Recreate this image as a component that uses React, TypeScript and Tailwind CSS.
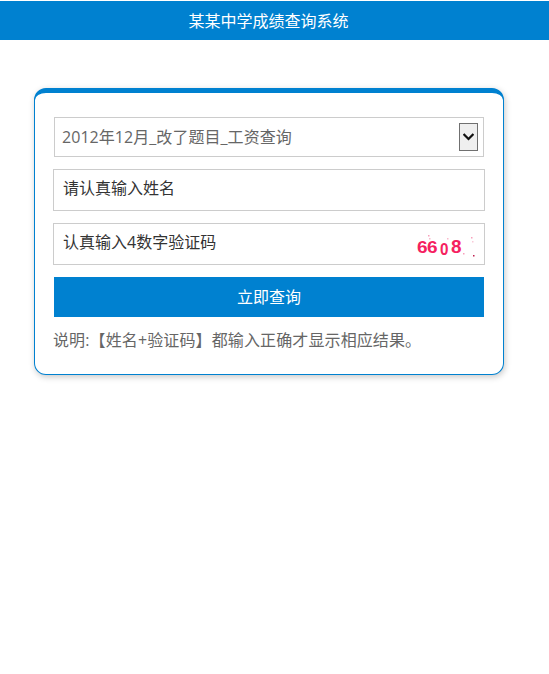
export default function App() {
  const font = "font-['Open_Sans','Noto_Sans_CJK_SC',sans-serif]";
  const digits: [string, number, number, number, number][] = [
    ["6", 17, 27, 17, 1.12],
    ["6", 27, 27, 17, 1.12],
    ["0", 40, 29, 16, 0.95],
    ["8", 51, 27, 18, 1.05],
  ];
  const dots: [number, number, string][] = [
    [28, 9, "#f7a0bb"],
    [29, 12, "#f9b9cc"],
    [47, 12, "#f9b9cc"],
    [71, 11, "#f7a0bb"],
    [72, 15, "#f9c9d8"],
    [63, 27, "#f7a0bb"],
    [73, 29, "#c02050"],
  ];
  return (
    <div className={`min-h-[674px] bg-white ${font}`}>
      <header className="mt-px flex h-[39px] items-center justify-center bg-[#0081d0] pr-[12px] pt-px text-[16px] text-white">
        某某中学成绩查询系统
      </header>
      <div className="px-[34px] pt-[48px]">
        <main className="flex h-[287px] w-[470px] flex-col gap-[12px] rounded-[12px] border border-t-[5px] border-[#0081d0] bg-white px-[19px] pt-[24px] shadow-[1px_2px_6px_rgba(0,0,0,0.22)]">
          <div className="relative h-[40px] w-[430px]">
            <select
              defaultValue="a"
              className="h-full w-full appearance-none border border-[#ccc] bg-white pb-px pl-[7px] pt-px text-[16px] tracking-[0.05px] text-[#666] outline-none"
            >
              <option value="a">2012年12月_改了题目_工资查询</option>
            </select>
            <span className="pointer-events-none absolute right-[6px] top-[6px] flex h-[28px] w-[19px] items-center justify-center border border-[#707070] bg-[#efefef]">
              <svg width="11" height="8" viewBox="0 0 11 8" fill="none" stroke="#111" strokeWidth="2.2">
                <path d="M0.6 1 L5.5 6 L10.4 1" />
              </svg>
            </span>
          </div>
          <input
            readOnly
            value=""
            placeholder="请认真输入姓名"
            className="-ml-px block h-[42px] w-[432px] border border-[#ccc] bg-white pb-[5px] pl-[9px] text-[16px] text-[#333] outline-none placeholder:text-[#333]"
          />
          <div className="relative -ml-px h-[42px] w-[432px]">
            <input
              readOnly
              value=""
              placeholder="认真输入4数字验证码"
              className="block h-full w-full border border-[#ccc] bg-white pb-[5px] pl-[9px] text-[16px] text-[#333] outline-none placeholder:text-[#333]"
            />
            <svg className="absolute right-[5px] top-[3px]" width="80" height="36" viewBox="0 0 80 36">
              {dots.map(([x, y, c], i) => (
                <rect key={i} x={x} y={y} width="1.5" height="1.5" fill={c} />
              ))}
              {digits.map(([d, x, y, size, sx], i) => (
                <text
                  key={i}
                  transform={`translate(${x} ${y}) scale(${sx} 1)`}
                  fill="#f5215f"
                  fontFamily="'Liberation Sans',sans-serif"
                  fontWeight="bold"
                  fontSize={size}
                >
                  {d}
                </text>
              ))}
            </svg>
          </div>
          <button className="block h-[40px] w-[430px] bg-[#0081d0] text-center text-[16px] text-white">
            立即查询
          </button>
          <p className="-ml-px -mt-px text-[16px] leading-[24px] tracking-[0.12px] text-[#666]">
            说明:【姓名+验证码】都输入正确才显示相应结果。
          </p>
        </main>
      </div>
    </div>
  );
}
